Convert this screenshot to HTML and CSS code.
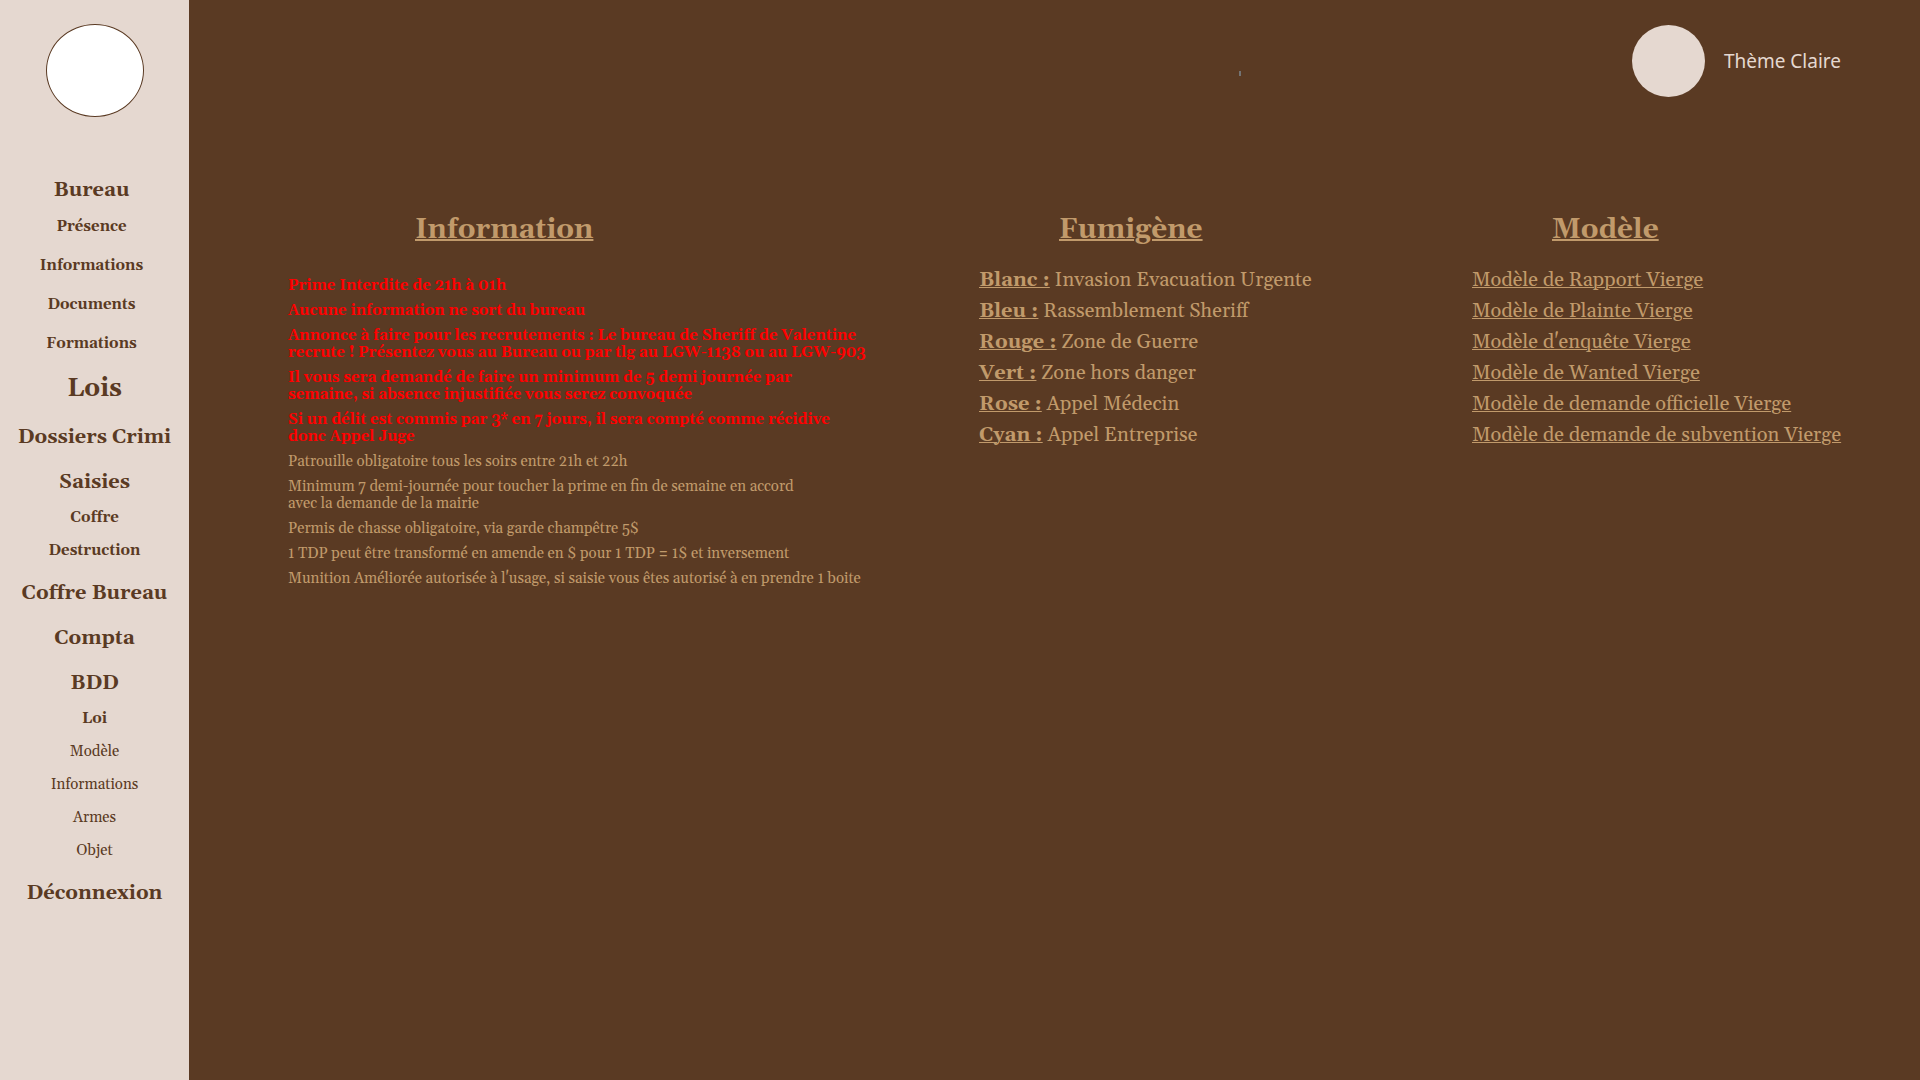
FILE: index.html
```
<!DOCTYPE html>
<html lang="fr">
<head>
<meta charset="utf-8">
<title>Bureau du Sheriff</title>
<meta name="viewport" content="width=device-width, initial-scale=1">
<link rel="stylesheet" href="styles.css">
</head>
<body>
<div class="layout">
  <nav class="sidebar">
    <div class="logo"></div>
    <ul class="menu">
      <li class="group shifted"><a href="#">Bureau</a>
        <ul class="submenu spaced">
          <li><a href="#">Présence</a></li>
          <li><a href="#">Informations</a></li>
          <li><a href="#">Documents</a></li>
          <li><a href="#">Formations</a></li>
        </ul>
      </li>
      <li class="large"><a href="#">Lois</a></li>
      <li><a href="#">Dossiers Crimi</a></li>
      <li><a href="#">Saisies</a>
        <ul class="submenu">
          <li><a href="#">Coffre</a></li>
          <li><a href="#">Destruction</a></li>
        </ul>
      </li>
      <li><a href="#">Coffre Bureau</a></li>
      <li><a href="#">Compta</a></li>
      <li><a href="#">BDD</a>
        <ul class="submenu">
          <li><a href="#">Loi</a></li>
          <li class="light"><a href="#">Modèle</a></li>
          <li class="light"><a href="#">Informations</a></li>
          <li class="light"><a href="#">Armes</a></li>
          <li class="light"><a href="#">Objet</a></li>
        </ul>
      </li>
      <li><a href="#">Déconnexion</a></li>
    </ul>
  </nav>
  <div class="page">
    <header class="topbar">
      <span class="tick"></span>
      <button class="theme" type="button"><span class="theme-dot"></span>Thème Claire</button>
    </header>
    <main class="columns">
      <section class="column wide">
        <h2>Information</h2>
        <ul class="infos">
          <li class="alert">Prime Interdite de 21h à 01h</li>
          <li class="alert">Aucune information ne sort du bureau</li>
          <li class="alert">Annonce à faire pour les recrutements : Le bureau de Sheriff de Valentine<br>recrute ! Présentez vous au Bureau ou par tlg au LGW-1138 ou au LGW-903</li>
          <li class="alert">Il vous sera demandé de faire un minimum de 5 demi journée par<br>semaine, si absence injustifiée vous serez convoquée</li>
          <li class="alert">Si un délit est commis par 3* en 7 jours, il sera compté comme récidive<br>donc Appel Juge</li>
          <li>Patrouille obligatoire tous les soirs entre 21h et 22h</li>
          <li>Minimum 7 demi-journée pour toucher la prime en fin de semaine en accord<br>avec la demande de la mairie</li>
          <li>Permis de chasse obligatoire, via garde champêtre 5$</li>
          <li>1 TDP peut être transformé en amende en $ pour 1 TDP = 1$ et inversement</li>
          <li>Munition Améliorée autorisée à l'usage, si saisie vous êtes autorisé à en prendre 1 boite</li>
        </ul>
      </section>
      <section class="column">
        <h2>Fumigène</h2>
        <ul class="entries">
          <li><strong>Blanc :</strong> Invasion Evacuation Urgente</li>
          <li><strong>Bleu :</strong> Rassemblement Sheriff</li>
          <li><strong>Rouge :</strong> Zone de Guerre</li>
          <li><strong>Vert :</strong> Zone hors danger</li>
          <li><strong>Rose :</strong> Appel Médecin</li>
          <li><strong>Cyan :</strong> Appel Entreprise</li>
        </ul>
      </section>
      <section class="column">
        <h2>Modèle</h2>
        <ul class="entries">
          <li><a href="#">Modèle de Rapport Vierge</a></li>
          <li><a href="#">Modèle de Plainte Vierge</a></li>
          <li><a href="#">Modèle d'enquête Vierge</a></li>
          <li><a href="#">Modèle de Wanted Vierge</a></li>
          <li><a href="#">Modèle de demande officielle Vierge</a></li>
          <li><a href="#">Modèle de demande de subvention Vierge</a></li>
        </ul>
      </section>
    </main>
  </div>
</div>
</body>
</html>
```
FILE: styles.css
```
* { box-sizing: border-box; }

body {
  margin: 0;
  background: #5a3a23;
  color: #c19a6b;
  font-family: Georgia, Gelasio, "Liberation Serif", serif;
  font-variant-numeric: oldstyle-nums;
}

ul { margin: 0; padding: 0; list-style: none; }
a { color: inherit; }

.layout { display: flex; min-height: 100vh; }

.sidebar {
  flex: none;
  width: 189px;
  padding-top: 24px;
  background: #e5d8d0;
  color: #5a3a23;
}

.logo {
  width: 98px;
  height: 93px;
  margin: 0 auto;
  border: 1px solid #5a3a23;
  border-radius: 50%;
  background: #fff;
}

.menu {
  display: flex;
  flex-direction: column;
  gap: 7px;
  margin-top: 54px;
  font-size: 20px;
  font-weight: bold;
  line-height: 38px;
  text-align: center;
}
.menu a { text-decoration: none; }
.shifted { padding-right: 6px; }
.large { font-size: 25px; line-height: 43px; }

.submenu { font-size: 15px; line-height: 33px; }
.spaced { display: grid; gap: 4px; line-height: 35px; }
.light { font-weight: normal; }

.page { flex: 1; min-width: 0; padding: 0 79px 0 99px; }

.topbar {
  display: flex;
  justify-content: flex-end;
  align-items: center;
  gap: 391px;
  padding-top: 25px;
}
.tick { width: 2px; height: 5px; margin-top: 24px; background: #737373; }

.theme {
  display: flex;
  align-items: center;
  gap: 19px;
  padding: 0;
  border: 0;
  background: none;
  color: #e5d8d0;
  font: 19px "Noto Sans", sans-serif;
}
.theme-dot { width: 73px; height: 72px; border-radius: 50%; background: #e5d8d0; }

.columns {
  display: grid;
  grid-template-columns: 691fr 493fr 369fr;
  margin-top: 116px;
}
.column { min-width: 0; white-space: nowrap; }

h2 {
  margin: 0 0 22px;
  padding-left: 80px;
  font-size: 28px;
  line-height: 34px;
  text-decoration: underline 2px;
}
.wide h2 { padding-left: 127px; margin-bottom: 30px; }

.infos { display: grid; gap: 8px; font-size: 15px; line-height: 17px; }
.alert { color: #f00; font-weight: bold; }

.entries { display: grid; gap: 8px; font-size: 20px; line-height: 23px; }
.entries strong, .entries a { text-decoration: underline 1px; }
```
